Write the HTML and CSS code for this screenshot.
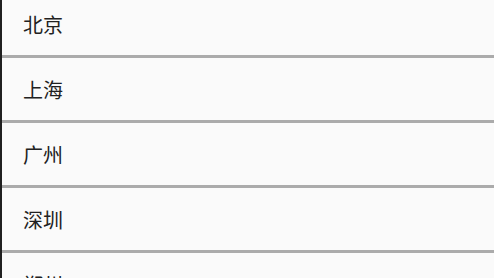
FILE: index.html
```html
<!DOCTYPE html>
<html lang="zh-CN">
<head>
<meta charset="utf-8">
<link rel="stylesheet" href="styles.css">
</head>
<body>
<ul class="city-list">
  <li class="city">北京</li>
  <li class="city">上海</li>
  <li class="city">广州</li>
  <li class="city">深圳</li>
  <li class="city">郑州</li>
</ul>
</body>
</html>
```
FILE: styles.css
```css
html, body {
  margin: 0;
  padding: 0;
  height: 100%;
  overflow: hidden;
  background: #fafafa;
}
.city-list {
  list-style: none;
  margin: 0;
  padding: 0;
  border-left: 2px solid #202020;
  min-height: 100%;
  box-sizing: border-box;
}
.city {
  height: 62px;
  display: flex;
  align-items: center;
  padding-left: 21px;
  border-bottom: 3px solid #ababab;
  font-family: "Noto Sans CJK SC", "Noto Sans", sans-serif;
  font-size: 20px;
  color: #212121;
}
.city:first-child {
  margin-top: -7px;
}
```
